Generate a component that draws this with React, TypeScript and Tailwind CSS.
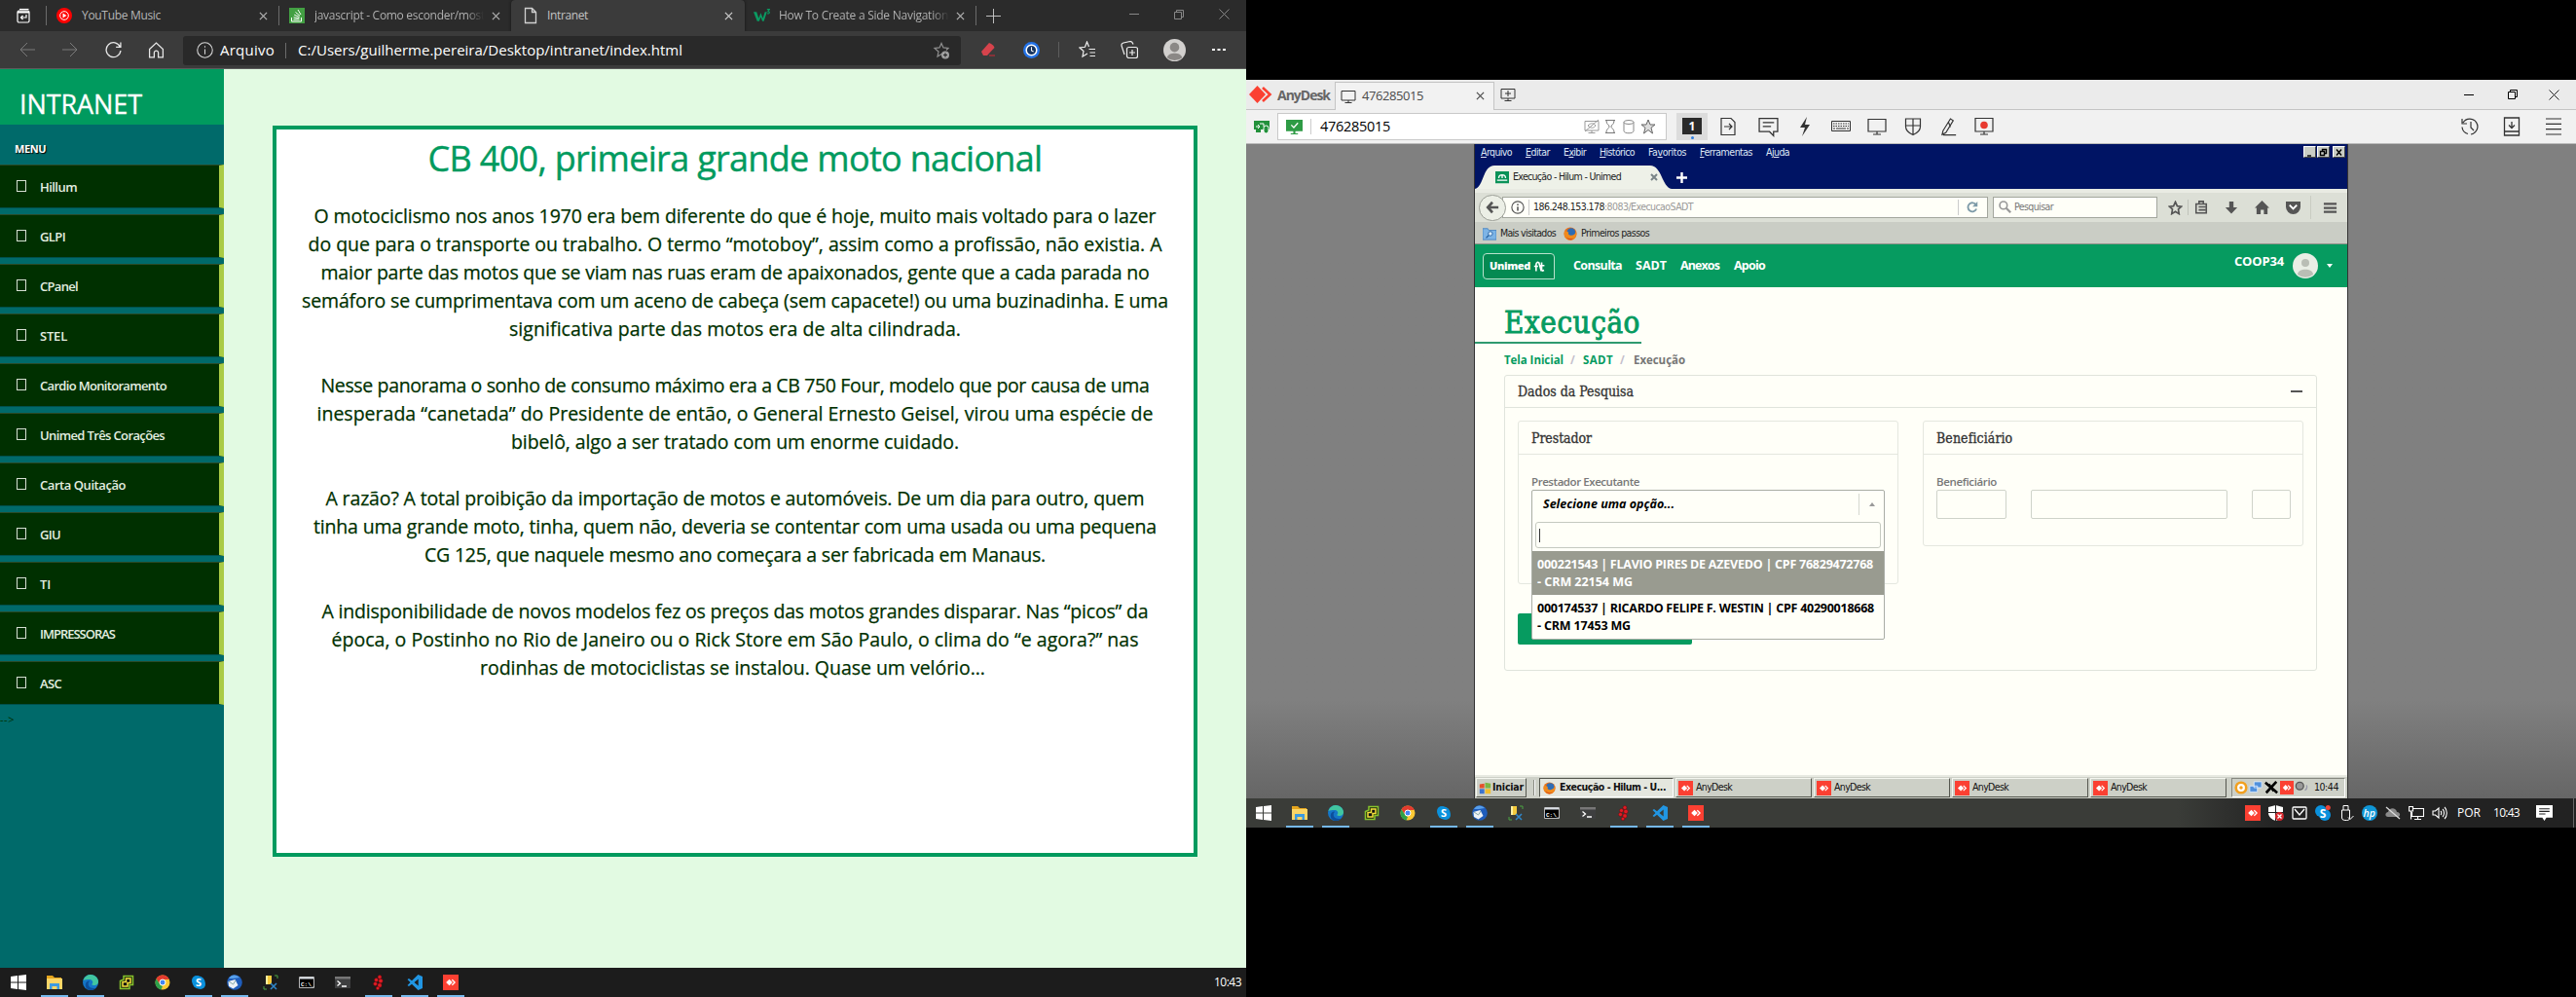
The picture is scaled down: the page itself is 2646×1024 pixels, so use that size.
import React, { useLayoutEffect, useRef, useState } from "react";

/** Text run tracked so that it occupies a given width. */
function T({ w, c = "", children }: { w: number; c?: string; children: React.ReactNode }) {
  const ref = useRef<HTMLSpanElement>(null);
  const [ls, setLs] = useState<number | null>(null);
  useLayoutEffect(() => {
    const el = ref.current;
    if (!el || ls !== null) return;
    const n = (el.textContent || "").length;
    setLs((w - el.getBoundingClientRect().width) / n);
  }, [ls, w]);
  return (
    <span ref={ref} className={"inline-block shrink-0 whitespace-pre " + c} style={{ letterSpacing: ls === null ? undefined : ls + "px" }}>
      {children}
    </span>
  );
}

function I({ c = "", s = 16, v = 16, sw = 1, children }: { c?: string; s?: number; v?: number; sw?: number; children: React.ReactNode }) {
  return (
    <svg width={s} height={s} viewBox={`0 0 ${v} ${v}`} fill="none" stroke="currentColor" strokeWidth={sw} className={"block shrink-0 " + c}>
      {children}
    </svg>
  );
}

const Close = ({ c = "", s = 9 }: { c?: string; s?: number }) => (
  <I c={c} s={s} v={10} sw={1.3}><path d="M1 1l8 8M9 1l-8 8" /></I>
);

const AnyIcon = ({ c = "", s = 16 }: { c?: string; s?: number }) => (
  <I c={c} s={s}>
    <path d="M0 0h16v16H0z" fill="#fb4032" stroke="none" />
    <path d="M6.500 4.700l3.300 3.300-3.300 3.300L3.200 8z" fill="#fff" stroke="none" />
    <path d="M9.300 5.200L12.100 8l-2.800 2.800" stroke="#fff" strokeWidth="1.300" />
  </I>
);

const Firefox = ({ c = "", s = 14 }: { c?: string; s?: number }) => (
  <I c={c} s={s}>
    <circle cx="8" cy="8" r="7.500" fill="#e8701a" stroke="none" />
    <circle cx="9" cy="6.500" r="5" fill="#2d6cb5" stroke="none" />
    <path d="M1 5c2-1 3 1 5 1-1 2 0 4 3 4s5-2 6-5c1 6-2 10.500-7 10.500S0 11 1 5z" fill="#f08a1d" stroke="none" />
    <path d="M3 11c2 3 6 4 9 2-2 3-7 3-9-2z" fill="#d23c17" stroke="none" />
  </I>
);

const taskIcons: { on: boolean; el: React.ReactNode }[] = [
  { on: false, el: <I c="text-white"><path fill="#fff" stroke="none" d="M0 2l7-1v6.500H0zM8 .9L16 0v7.500H8zM0 8.500h7V15l-7-1zM8 8.500h8V16l-8-1z" /></I> },
  { on: true, el: <I><path fill="#e5a51d" stroke="none" d="M0 1h6l2 2h7v3H0z" /><path fill="#fbd667" stroke="none" d="M0 4h16v11H0z" /><path fill="#3d9be0" stroke="none" d="M3 9h10v6h-2.500v-3h-5v3H3z" /></I> },
  { on: true, el: <I><circle cx="8" cy="8" r="8" fill="#1476c8" stroke="none" /><path d="M.5 6C2 1 6 0 8 0c5 0 8 4 8 7 0 3-2 4-4.500 4S9 10 10 9c1-2-1-4-3-4-3 0-5 0-6.500 1z" fill="#41c6a0" stroke="none" /><path d="M6 8c-1 3 1 6 5 6 1 0 2 0 3-1-2 3-5 3-6 3-4 0-6-4-5-7 1-2 3-3 4-2z" fill="#0c4f9c" stroke="none" /></I> },
  { on: false, el: <I sw={1.5}><path d="M5 1.500h9.500v9H11v4H1.500v-8L5 5z" fill="#1a220c" stroke="#86c32c" /><path d="M7.500 4h4.500v4.500H9V12H4V7.500h3.500z" fill="#111" stroke="#f4de3b" /></I> },
  { on: false, el: <I><circle cx="8" cy="8" r="7.500" fill="#fcc934" stroke="none" /><path d="M1.500 4.300A7.500 7.500 0 0114.800 5H8L5 9.500z" fill="#e33b2e" stroke="none" /><path d="M1.500 4.300L6 11l2 1-1.500 3.500A7.500 7.500 0 011.500 4.300z" fill="#2da14c" stroke="none" /><circle cx="8" cy="8" r="3" fill="#4286f4" stroke="#fff" /></I> },
  { on: true, el: <I><circle cx="6" cy="6" r="5" fill="#0b91dc" stroke="none" /><circle cx="10" cy="10" r="5" fill="#0b91dc" stroke="none" /><circle cx="8" cy="8" r="6.500" fill="#0b91dc" stroke="none" /><text x="8" y="11.800" textAnchor="middle" fontSize="11" fontWeight="700" fill="#fff" stroke="none" fontFamily="Open Sans, sans-serif">S</text></I> },
  { on: true, el: <I><circle cx="8" cy="8" r="7.800" fill="#1f5dbb" stroke="none" /><path d="M2 4c3-5 8-4 11-1l-6 1z" fill="#58a0ea" stroke="none" /><path d="M1.500 7l7-2 3 6-5 3.500L2 12z" fill="#eef2f6" stroke="none" /><path d="M2 7l4.500 3L9 6" stroke="#8aa" /></I> },
  { on: false, el: <I><path d="M3 1h6v9H3z" fill="#f3c93c" stroke="none" /><path d="M3 1h2v9H3z" fill="#fff0a0" stroke="none" /><path d="M12 1h3v3M1 12v3h3" stroke="#4aa543" /><path d="M8 9l6 6M14 9l-6 6" stroke="#2f86c9" strokeWidth="1.600" /></I> },
  { on: false, el: <I><path d="M.5 2.500h15v11H.5z" fill="#000" stroke="#b8b8b8" /><path d="M1 3.500h14" stroke="#d8dee4" strokeWidth="2" /><text x="2" y="11.500" fontSize="6" fontWeight="700" fill="#fff" stroke="none" fontFamily="Liberation Mono, monospace">C:\_</text></I> },
  { on: false, el: <I><path d="M0 2h16v12H0z" fill="#3e3f40" stroke="none" /><path d="M0 2h16v2.500H0z" fill="#777" stroke="none" /><path d="M2.500 6.500L5.500 9l-3 2.500M7 12h5" stroke="#fff" strokeWidth="1.300" /></I> },
  { on: true, el: <I><g fill="#df1b24" stroke="#5a0608" strokeWidth=".4"><circle cx="9" cy="2.500" r="2" /><circle cx="5.500" cy="5.500" r="2" /><circle cx="10" cy="6.500" r="2.200" /><circle cx="4.500" cy="9.500" r="2" /><circle cx="9" cy="11" r="2.200" /><circle cx="7" cy="14" r="1.800" /></g></I> },
  { on: true, el: <I><path d="M11.500 0L16 2v12l-4.500 2L5 9.700 2 12 .5 11 3.500 8 .5 5 2 4l3 2.300zM11.700 4.500L7.500 8l4.200 3.500z" fill="#2196e3" stroke="none" fillRule="evenodd" /></I> },
  { on: true, el: <AnyIcon /> },
];

function TaskIcons() {
  return (
    <div className="flex h-full">
      {taskIcons.map((t, i) => (
        <div key={i} className="flex h-full w-[37px] flex-col items-center">
          <div className="flex h-[28px] items-center pt-[2px]">{t.el}</div>
          <div className={"h-[2px] w-7 " + (t.on ? "bg-[#76b9ed]" : "")} />
        </div>
      ))}
    </div>
  );
}

/* ---------- left monitor ---------- */

function EdgeTabs() {
  return (
    <div className="flex h-8 shrink-0 items-center bg-[#2b2b2b] text-[12px] text-[#b5b5b5]">
      <I c="ml-[16px] text-white" s={16} sw={1.2}><rect x="2" y="3" width="12" height="12" rx="1.500" /><path d="M2 4.500h12" strokeWidth="2" /><path d="M4 1.500h9.500" /><path d="M11 7v3H5.500m2-2l-2 2 2 2" /></I>
      <div className="ml-[15px] h-5 w-px bg-[#6b6b6b]" />
      <I c="ml-[10px]"><circle cx="8" cy="8" r="8" fill="#f00" stroke="none" /><circle cx="8" cy="8" r="4.300" stroke="#fff" /><path d="M6.500 5.500v5l4-2.500z" fill="#fff" stroke="none" /></I>
      <T c="ml-[10px]" w={81}>YouTube Music</T>
      <Close c="ml-[101px]" />
      <div className="ml-[11px] h-5 w-px bg-[#6b6b6b]" />
      <I c="ml-[10px]"><path d="M0 0h16v16H0z" fill="#43a043" stroke="none" /><path d="M2.500 10v4h10v-4M4.500 12h6M4.600 9.800l5.800.9M5.200 7.200l5.400 2.200M6.500 4.500l4.500 3.700M9 2l3 5" stroke="#fff" /></I>
      <div className="ml-[10px] w-[174px] overflow-hidden bg-gradient-to-r from-[#b5b5b5] from-90% to-[#2b2b2b] bg-clip-text text-transparent">
        <T w={175}>javascript - Como esconder/most</T>
      </div>
      <Close c="ml-[8px]" />
      <div className="ml-[11px] flex h-8 w-[240px] items-center rounded-t-[4px] bg-[#3b3b3b] shadow-[0_0_3px_#111]">
        <I c="ml-[11px] text-[#d0d0d0]" s={18} v={18} sw={1.3}><path d="M3.500 1.500h7l4 4v11h-11zM10.500 1.500v4h4" /></I>
        <T c="ml-[8px] text-[#c4c4c4]" w={42}>Intranet</T>
        <Close c="ml-[140px] text-[#d0d0d0]" />
      </div>
      <I c="ml-[9px]" s={17}><path d="M0 4h3l2 6 2-5 2 5 2-6h2l-3 9H8.500L7 9l-1.500 4H3.500z" fill="#0a9a62" stroke="none" /><path d="M13 1.500h2.500L14 3.500c2 0 2 2.500-.8 2" stroke="#0a9a62" /></I>
      <div className="ml-[9px] w-[175px] overflow-hidden bg-gradient-to-r from-[#b5b5b5] from-90% to-[#2b2b2b] bg-clip-text text-transparent">
        <T w={174}>How To Create a Side Navigation</T>
      </div>
      <Close c="ml-[7px]" />
      <div className="ml-[11px] h-5 w-px bg-[#6b6b6b]" />
      <I c="ml-[10px] text-[#c8c8c8]" s={15}><path d="M8 0v16M0 8h16" /></I>
      <div className="ml-[132px] mb-[3px] h-px w-[10px] bg-[#888]" />
      <I c="ml-[36px] mb-[3px] text-[#888]" s={10} v={10}><path d="M.5 2.500h7v7h-7zM2.500 2.500v-2h7v7h-2" /></I>
      <I c="ml-[36px] mb-[3px] text-[#888]" s={11} v={11}><path d="M.5.5l10 10M10.500.5l-10 10" /></I>
    </div>
  );
}

function EdgeToolbar() {
  return (
    <div className="flex h-[39px] shrink-0 items-center border-b border-[#5c5c5c] bg-[#3b3b3b] text-white">
      <I c="ml-[20px] text-[#7b7b7b]"><path d="M16 8H1M8 1L1 8l7 7" /></I>
      <I c="ml-[28px] text-[#7b7b7b]"><path d="M0 8h15M8 1l7 7-7 7" /></I>
      <I c="ml-[28px] text-[#e8e8e8]" s={17} sw={1.2}><path d="M14.500 5A7 7 0 1015 8.500M15 .5V5h-4.500" /></I>
      <I c="ml-[27px] text-[#e8e8e8]" s={17} sw={1.2}><path d="M1.500 7L8 1l6.500 6v8H10v-4.500a2 2 0 00-4 0V15H1.500z" /></I>
      <div className="ml-[19px] mt-px flex h-[30px] w-[799px] items-center rounded-[3px] bg-[#292929] text-[15px]">
        <I c="ml-[14px] text-[#d8d8d8]" s={17}><circle cx="8" cy="8" r="7.300" /><path d="M8 7v5M8 4v1.500" /></I>
        <T c="ml-[7px]" w={56}>Arquivo</T>
        <div className="ml-[11px] h-4 w-px bg-[#6b6b6b]" />
        <T c="ml-[12px]" w={395}>C:/Users/guilherme.pereira/Desktop/intranet/index.html</T>
        <I c="ml-[257px] text-[#909090]" s={18} v={18} sw={1.2}><path d="M10 12l-5 3 1-5L2 6.500l5-.6L9 1.500l2 4.400 5 .6-2 2" /><circle cx="13" cy="13.500" r="4" fill="#a0a0a0" stroke="none" /><path d="M13 11.500v4M11 13.500h4" stroke="#292929" /></I>
      </div>
      <I c="ml-[20px]" s={16}><path d="M1 10L9 1c3 1 5 3 5.500 5L7 14H3z" fill="#d6434c" stroke="none" /><path d="M9 14h6" stroke="#a03038" strokeWidth="1.500" /></I>
      <I c="ml-[28px]" s={17}><circle cx="8" cy="8" r="8" fill="#2473e8" stroke="none" /><circle cx="8" cy="8" r="5" fill="#17345f" stroke="#fff" strokeWidth="1.400" /><path d="M8 5v3.500l2 1" stroke="#fff" /></I>
      <div className="ml-[19px] h-4 w-px bg-[#5d5d5d]" />
      <I c="ml-[20px] text-[#eee]" s={18} v={18} sw={1.2}><path d="M9 13l-5 3 1-5.500L1 7l5.500-.7L8.500 1l2 5M10.500 8.500H17M11.500 12H17M11.500 15.500H17" /></I>
      <I c="ml-[25px] text-[#eee]" s={18} v={18} sw={1.2}><rect x="6.500" y="6.500" width="11" height="11" rx="2" /><path d="M12 9v6M9 12h6M4 14L1 5c0-2 0-2 2-3l7-1.500c2 0 2 1 3 3" /></I>
      <I c="ml-[26px]" s={23} v={24}><circle cx="12" cy="12" r="12" fill="#d2d0ce" stroke="none" /><circle cx="12" cy="9" r="5" fill="#8b8886" stroke="none" /><path d="M4 20c1-6 15-6 16 0a12 12 0 01-16 0z" fill="#8b8886" stroke="none" /></I>
      <I c="ml-[26px]" s={16}><path d="M1 7h3v2H1zM6.500 7h3v2h-3zM12 7h3v2h-3z" fill="#fff" stroke="none" /></I>
    </div>
  );
}

const menu: [string, number][] = [
  ["Hillum", 38], ["GLPI", 26], ["CPanel", 39], ["STEL", 28], ["Cardio Monitoramento", 130], ["Unimed Três Corações", 128],
  ["Carta Quitação", 88], ["GIU", 21], ["TI", 11], ["IMPRESSORAS", 77], ["ASC", 22],
];

function Sidebar() {
  return (
    <aside className="w-[230px] shrink-0 bg-[#006a6a] font-['Open_Sans',sans-serif]">
      <div className="flex h-[57px] items-end bg-[#009a5e] pl-[20px] text-[27px] font-medium leading-[43px] text-white [-webkit-text-stroke:0.3px_#fff]">
        <T w={126}>INTRANET</T>
      </div>
      <div className="flex h-[41px] items-center pl-[15px] pt-[9px] text-[11px] font-bold text-white [text-shadow:1px_1px_1px_#000]">
        <T w={32}>MENU</T>
      </div>
      <div className="flex flex-col gap-[6px]">
        {menu.map(([m, w]) => (
          <div key={m} className="flex h-[45px] items-center border-b border-r-[5px] border-t border-b-[#00504c] border-r-[#aacb45] border-t-[#2a4a26] bg-[#003000] pl-[17px] pt-[2px] text-[13px] font-semibold text-[#e4eee0]">
            <div className="mb-[4px] h-[12px] w-[10px] border border-[#d5dfd2]" />
            <T c="ml-[14px]" w={w}>{m}</T>
          </div>
        ))}
      </div>
      <div className="mt-[7px] text-[11px] leading-4 text-[#003000]"><T w={15}>{"-->"}</T></div>
    </aside>
  );
}

const paragraphs: [string, number][][] = [
  [
    ["O motociclismo nos anos 1970 era bem diferente do que é hoje, muito mais voltado para o lazer", 865],
    ["do que para o transporte ou trabalho. O termo “motoboy”, assim como a profissão, não existia. A", 877],
    ["maior parte das motos que se viam nas ruas eram de apaixonados, gente que a cada parada no", 851],
    ["semáforo se cumprimentava com um aceno de cabeça (sem capacete!) ou uma buzinadinha. E uma", 890],
    ["significativa parte das motos era de alta cilindrada.", 464],
  ],
  [
    ["Nesse panorama o sonho de consumo máximo era a CB 750 Four, modelo que por causa de uma", 851],
    ["inesperada “canetada” do Presidente de então, o General Ernesto Geisel, virou uma espécie de", 859],
    ["bibelô, algo a ser tratado com um enorme cuidado.", 460],
  ],
  [
    ["A razão? A total proibição da importação de motos e automóveis. De um dia para outro, quem", 841],
    ["tinha uma grande moto, tinha, quem não, deveria se contentar com uma usada ou uma pequena", 866],
    ["CG 125, que naquele mesmo ano começara a ser fabricada em Manaus.", 638],
  ],
  [
    ["A indisponibilidade de novos modelos fez os preços das motos grandes disparar. Nas “picos” da", 849],
    ["época, o Postinho no Rio de Janeiro ou o Rick Store em São Paulo, o clima do “e agora?” nas", 829],
    ["rodinhas de motociclistas se instalou. Quase um velório... ", 524],
  ],
];

function LeftMonitor() {
  return (
    <div className="flex h-[1024px] w-[1280px] shrink-0 flex-col">
      <EdgeTabs />
      <EdgeToolbar />
      <div className="flex h-[923px] bg-[#e2fae2]">
        <Sidebar />
        <main className="ml-[50px] mt-[58px] flex h-[751px] w-[950px] flex-col items-center border-4 border-[#009a5e] bg-white font-['Open_Sans',sans-serif] text-[#003000]">
          <h1 className="mt-[4px] text-[36px] leading-[52px] text-[#009a5e] [-webkit-text-stroke:0.4px_#009a5e]"><T w={631}>CB 400, primeira grande moto nacional</T></h1>
          <div className="mt-[18px] flex flex-col gap-[29px] text-[19.5px] leading-[29px] [-webkit-text-stroke:0.25px_#003000]">
            {paragraphs.map((p, i) => (
              <div key={i} className="flex flex-col items-center">
                {p.map(([t, w]) => <div key={t} className="h-[29px]"><T w={w}>{t}</T></div>)}
              </div>
            ))}
          </div>
        </main>
      </div>
      <div className="flex h-[30px] items-center bg-[#1c1c1c] text-white">
        <TaskIcons />
        <T c="ml-[766px] text-[12px]" w={28}>10:43</T>
      </div>
    </div>
  );
}

/* ---------- right monitor ---------- */

function AnyDeskChrome() {
  return (
    <>
      <div className="flex h-[31px] shrink-0 items-center border-b border-[#c4c4c4] bg-[#ebebeb] text-[#4a4a4a]">
        <svg width="24" height="18" viewBox="0 0 24 18" className="ml-[3px] shrink-0"><path d="M8.500 0L17 9l-8.500 9L0 9z" fill="#fb4032" /><path d="M14 2l7.500 7-7.500 7" fill="none" stroke="#fb4032" strokeWidth="2.600" /></svg>
        <T c="ml-[5px] text-[14px] font-bold text-[#666]" w={54}>AnyDesk</T>
        <div className="ml-[5px] mt-[2px] flex h-[29px] w-[164px] items-center border border-b-0 border-[#c4c4c4] bg-[#f2f2f2] text-[13px]">
          <I c="ml-[5px] text-[#333]" s={16}><path d="M1 2.500h14v9.500H1zM8 12v2.500M4.500 14.500h7" /></I>
          <T c="ml-[6px]" w={63}>476285015</T>
          <Close c="ml-[54px]" s={9} />
        </div>
        <I c="ml-[6px] text-[#333]" s={16}><path d="M1 2.500h14v9.500H1zM8 12v2.500M4.500 14.500h7M8 4v6M5 7h6" /></I>
        <div className="ml-[974px] h-px w-[10px] bg-black" />
        <I c="ml-[35px] text-black" s={10} v={10}><path d="M.5 2.500h7v7h-7zM2.500 2.500v-2h7v7h-2" /></I>
        <I c="ml-[32px] text-[#222]" s={11} v={11}><path d="M.5.5l10 10M10.500.5l-10 10" /></I>
      </div>
      <div className="flex h-[35px] shrink-0 items-center border-b border-[#b9b9b9] bg-[#f1f1f1] text-[#333]">
        <I c="ml-[8px]"><path d="M0 2h16v9H0z" fill="#23913b" stroke="none" /><path d="M2 11h5v3H2z" fill="#23913b" stroke="none" /><path d="M2 8h4m-2-2l2 2-2 2M6 5h4v3" stroke="#fff" /><rect x="10" y="7" width="5" height="8" rx="2.500" fill="#23913b" stroke="#fff" /></I>
        <div className="ml-[8px] flex h-[28px] w-[400px] items-center border border-[#c9c9c9] bg-white">
          <I c="ml-[8px]" s={17}><path d="M0 1h16v11H0zM7 12h2v2h2.500v1h-7v-1H7z" fill="#2e9b45" stroke="none" /><path d="M5 6l2.500 2.500L11.500 4" stroke="#fff" strokeWidth="1.200" /></I>
          <div className="ml-[8px] h-4 w-px bg-[#ccc]" />
          <T c="ml-[9px] text-[14.5px] text-black" w={72}>476285015</T>
          <I c="ml-[199px] text-[#999]" s={16}><path d="M1 2.500h14v9.500H1zM8 12v2.500M4.500 14.500h7M1 13L15 1M4 7c3-3 6-3 8 0-2 3-5 3-8 0z" /></I>
          <I c="ml-[3px] text-[#777]" s={16}><path d="M3 1.500h10M3 14.500h10M4 2c0 4 3 4 3 6s-3 2-3 6M12 2c0 4-3 4-3 6s3 2 3 6" /></I>
          <I c="ml-[3px] text-[#888]" s={16}><ellipse cx="8" cy="3.500" rx="5" ry="2" /><path d="M3 3.500v9c0 3 10 3 10 0v-9" /></I>
          <I c="ml-[4px] text-[#666]" s={16}><path d="M8 1l2 5h5l-4 3.200L12.500 15 8 11.500 3.500 15 5 9.200 1 6h5z" fill="#ddd" /></I>
        </div>
        <div className="ml-[10px] flex h-[28px] w-[32px] flex-col items-center bg-[#dcdcdc] pt-[5px]">
          <div className="flex h-[17px] w-5 items-center justify-center bg-[#2a2a2a] text-[12px] font-bold text-white">1</div>
          <div className="mt-[2px] h-[3px] w-[3px] rounded-full bg-[#2f7fe0]" />
        </div>
        <I c="ml-[11px]" s={20} v={20} sw={1.2}><path d="M3 1.500h10l4 4v13H3zM6 10h8M11 7l3 3-3 3" /></I>
        <I c="ml-[21px]" s={21} v={20} sw={1.2}><path d="M1 1.500h18v13h-4v4l-4-4H1zM4.500 5.500h11M4.500 9.500h8" /></I>
        <I c="ml-[17px]" s={20} v={20}><path d="M12 0L5 11h5l-3 9 8-12H10z" fill="#333" stroke="none" /></I>
        <I c="ml-[17px]" s={20} v={20}><path d="M.5 4.500h19v10H.5z" /><path d="M2 7h16M2 9.500h16" strokeDasharray="1.500 1" /><path d="M2 12h2M5 12h10M16 12h2" /></I>
        <I c="ml-[17px]" s={20} v={20} sw={1.2}><path d="M1 2.500h18V15H1zM10 15v3M6 18h8" /></I>
        <I c="ml-[17px]" s={20} v={20} sw={1.2}><path d="M2.500 2h15v8c0 4-4 7-7.500 8.500C6.500 17 2.500 14 2.500 10zM10 2v16M2.500 9h15" /></I>
        <I c="ml-[18px]" s={19} v={20} sw={1.2}><path d="M3 14L11 1l3 2-8 13-4 2zM9 5l2 5M3 18.500h14" /></I>
        <I c="ml-[16px]" s={20} v={20} sw={1.2}><path d="M1 1.500h18V15H1zM10 15v3M6 18h8" /><circle cx="10" cy="8.500" r="3.800" fill="#e8392f" stroke="none" /></I>
        <I c="ml-[479px]" s={20} v={20} sw={1.2}><path d="M3 6a8 8 0 118 12M8 17.500a8 8 0 01-6-7M2 2v5h5M11 5v6l3 3" /></I>
        <I c="ml-[23px]" s={20} v={20} sw={1.3}><path d="M2.500 1h15v18h-15zM2.500 15h15M10 5v6M7 8.500l3 3 3-3" /></I>
        <I c="ml-[23px]" s={20} v={20} sw={1.2}><path d="M2 2h16M2 7.300h16M2 12.600h16M2 18h16" /></I>
      </div>
    </>
  );
}

const Mn = ({ a, u, b, w, c }: { a: string; u: string; b: string; w: number; c: string }) => (
  <T w={w} c={c}>{a}<span className="underline">{u}</span>{b}</T>
);

function FirefoxChrome() {
  return (
    <div className="font-['DejaVu_Sans_Condensed','DejaVu_Sans',sans-serif] text-[10.5px]">
      <div className="h-[46px] bg-[#001464] text-[#dfe6f5]">
        <div className="flex h-[22px] items-start">
          <Mn c="ml-[6px] mt-[1px]" a="" u="A" b="rquivo" w={32} />
          <Mn c="ml-[14px] mt-[1px]" a="" u="E" b="ditar" w={25} />
          <Mn c="ml-[14px] mt-[1px]" a="E" u="x" b="ibir" w={23} />
          <Mn c="ml-[14px] mt-[1px]" a="" u="H" b="istórico" w={36} />
          <Mn c="ml-[14px] mt-[1px]" a="Fa" u="v" b="oritos" w={39} />
          <Mn c="ml-[14px] mt-[1px]" a="" u="F" b="erramentas" w={54} />
          <Mn c="ml-[14px] mt-[1px]" a="Aj" u="u" b="da" w={24} />
          <div className="ml-[528px] mt-[2px] flex gap-px">
            {["M2 8h4", "M3.500 3.500v-2h4v4h-2M1.500 3.500h4v4h-4z", "M2 1.500l5 6M7 1.500l-5 6"].map((d, i) => (
              <div key={i} className={"flex h-[12px] w-[13px] items-center justify-center border border-b-[#444] border-l-white border-r-[#444] border-t-white bg-[#cacdc5] text-black " + (i === 2 ? "ml-[2px]" : "")}>
                <I s={9} v={9} sw={1.4}><path d={d} /></I>
              </div>
            ))}
          </div>
        </div>
        <div className="flex h-[24px] items-center">
          <div className="h-[24px] w-[202px] bg-[#eef1e8] [clip-path:path('M0_24C9_22_8_0_20_0H180C192_0_192_22_202_24Z')]">
            <div className="ml-[21px] flex h-[24px] items-center text-[#222]">
              <I s={14}><path d="M0 1h16v14H0z" fill="#0a9258" stroke="none" /><path d="M2 11.500h12" stroke="#fff" strokeWidth="1.500" /><path d="M4 9c0-5 8-5 8 0M8 5v4" stroke="#fff" strokeWidth="1.500" /></I>
              <T c="ml-[4px]" w={111}>Execução - Hilum - Unimed</T>
              <I c="ml-[30px] text-[#7a8588]" s={8} v={8} sw={2}><path d="M1 1l6 6M7 1l-6 6" /></I>
            </div>
          </div>
          <I c="ml-[5px] text-white" s={11} v={11} sw={2.4}><path d="M5.500 0v11M0 5.500h11" /></I>
        </div>
      </div>
      <div className="flex h-[34px] items-center border-t-4 border-[#e9ebe3] bg-[#dcdfd6] text-[#555]">
        <div className="z-10 ml-[4px] flex h-[27px] w-[28px] shrink-0 items-center justify-center rounded-full border border-[#9b9e96] bg-[#ecefe6]">
          <I s={14} sw={3}><path d="M15 8H3M8 2L2.500 8 8 14" /></I>
        </div>
        <div className="-ml-[4px] mb-[1px] flex h-[22px] w-[499px] items-center border border-[#a3a69d] bg-[#fffff8]">
          <I c="ml-[8px]" s={14} sw={1.3}><circle cx="8" cy="8" r="7" /><path d="M8 7v5M8 4v1.700" strokeWidth="1.800" /></I>
          <div className="ml-[4px] h-4 w-px bg-[#ccc]" />
          <T c="ml-[4px] text-[#222]" w={73}>186.248.153.178</T>
          <T c="text-[#999]" w={91}>:8083/ExecucaoSADT</T>
          <div className="ml-[272px] h-4 w-px bg-[#ccc]" />
          <I c="ml-[8px] text-[#7d9aa8]" s={12} sw={2.5}><path d="M13 4.500A6 6 0 1013.500 10" /><path d="M15 0v7H8z" fill="currentColor" stroke="none" /></I>
        </div>
        <div className="ml-[5px] mb-[1px] flex h-[22px] w-[169px] items-center border border-[#a3a69d] bg-[#fffff8] text-[#777]">
          <I c="ml-[5px] text-[#999]" s={13} sw={2}><circle cx="6" cy="6" r="4.700" /><path d="M9.500 9.500L15 15" strokeWidth="2.800" /></I>
          <T c="ml-[3px]" w={40}>Pesquisar</T>
        </div>
        <I c="ml-[11px]" s={15} sw={1.8}><path d="M8 1.500l2 4.500 4.500.5-3.300 3L12 14.500 8 12l-4 2.500.8-5-3.300-3L6 6z" /></I>
        <div className="ml-[5px] h-4 w-px bg-[#c0c3ba]" />
        <I c="ml-[6px]" s={14} sw={1.8}><path d="M2 4h12v10.500H2zM5.500 3.500V1h5v2.500M5 7.500h8M5 11h8" /></I>
        <I c="ml-[17px]" s={14}><path d="M5.500 1h5v7H15l-7 7.500L1 8h4.500z" fill="#555" stroke="none" /></I>
        <I c="ml-[17px]" s={15}><path d="M8 0l8 8h-2v7h-4v-5H6.500v5H2V8H0z" fill="#555" stroke="none" /></I>
        <I c="ml-[17px]" s={15}><path d="M0 1h16v6a8 8 0 01-16 0z" fill="#555" stroke="none" /><path d="M4 5l4 4 4-4" stroke="#fff" strokeWidth="2" /></I>
        <div className="ml-[10px] h-6 w-px bg-[#c9ccc2]" />
        <I c="ml-[12px]" s={15} sw={2.4}><path d="M1 3.500h14M1 8h14M1 12.500h14" /></I>
      </div>
      <div className="flex h-[23px] items-center border-b border-[#8e9088] bg-[#cacdc5] pt-[2px] text-[#222]">
        <I c="ml-[8px]" s={14}><path d="M0 2h6l1 2h9v11H0z" fill="#7db4e6" stroke="#4a86c0" /><circle cx="9" cy="8" r="2.500" stroke="#235f9e" fill="#d8ecff" /><path d="M7 10l-3 3" stroke="#235f9e" strokeWidth="1.500" /></I>
        <T c="ml-[4px]" w={57}>Mais visitados</T>
        <Firefox c="ml-[8px]" />
        <T c="ml-[4px]" w={70}>Primeiros passos</T>
      </div>
    </div>
  );
}

const slab = "font-['DejaVu_Serif_Condensed','DejaVu_Serif',serif]";

function RemotePage() {
  return (
    <div className="flex h-[545px] flex-col bg-[#fffff8] font-['Open_Sans',sans-serif]">
      <div className="flex h-[44px] shrink-0 items-center bg-[#069b60] text-[12.5px] font-bold text-white">
        <div className="ml-[8px] flex h-[27px] w-[74px] items-center rounded-[4px] rounded-br-none border border-[#b8e2cd] bg-[#048a52] pl-[6px] text-[11px] font-extrabold">
          <T w={42}>Unimed</T>
          <I c="ml-[3px]" s={13} sw={2}><path d="M3.500 14V6c0-3 3-4 3.500-2M1 8h5M7 3l3 11M10.500 3v9c0 2 1 2 3 1M8 7h6" /></I>
        </div>
        <T c="ml-[19px]" w={50}>Consulta</T>
        <T c="ml-[14px]" w={32}>SADT</T>
        <T c="ml-[14px]" w={40}>Anexos</T>
        <T c="ml-[15px]" w={32}>Apoio</T>
        <T c="ml-[482px] mb-[8px] text-[13px]" w={51}>COOP34</T>
        <I c="ml-[9px]" s={26} v={26}><circle cx="13" cy="13" r="13" fill="#e9eee5" stroke="none" /><circle cx="13" cy="10" r="4" fill="#b9beb5" stroke="none" /><path d="M5 22c0-7 16-7 16 0a13 13 0 01-16 0z" fill="#b9beb5" stroke="none" /></I>
        <I c="ml-[9px]" s={6} v={6}><path d="M0 1h6L3 5z" fill="#fff" stroke="none" /></I>
      </div>
      <div className={"mt-[15px] h-[43px] w-[171px] border-b-2 border-[#2f9a70] pl-[30px] text-[31px] leading-[42px] text-[#069b60] [-webkit-text-stroke:0.9px_#069b60] " + slab}>
        <T w={140}>Execução</T>
      </div>
      <div className="mt-[7px] flex h-[20px] items-center pl-[30px] text-[11.5px] font-bold text-[#069b60]">
        <T w={61}>Tela Inicial</T>
        <span className="ml-[7px] w-[6px] text-[#c5bfcc]">/</span>
        <T c="ml-[7px]" w={31}>SADT</T>
        <span className="ml-[7px] w-[6px] text-[#c5bfcc]">/</span>
        <T c="ml-[8px] text-[#777]" w={53}>Execução</T>
      </div>
      <div className="ml-[30px] mt-[5px] h-[304px] w-[835px] rounded-[3px] border border-[#e0e4dc]">
        <div className={"flex h-[33px] items-center justify-between border-b border-[#e0e4dc] pl-[13px] pr-[14px] text-[14px] text-[#333] [-webkit-text-stroke:0.3px_#333] " + slab}>
          <T w={119}>Dados da Pesquisa</T>
          <div className="h-[2px] w-[12px] bg-[#555]" />
        </div>
        <div className="flex items-start gap-[25px] pl-[13px] pt-[13px]">
          <div className="relative h-[168px] w-[391px] rounded-[3px] border border-[#e4e7df]">
            <div className={"flex h-[34px] items-center border-b border-[#e4e7df] pl-[13px] pt-[2px] text-[14px] text-[#333] [-webkit-text-stroke:0.3px_#333] " + slab}><T w={62}>Prestador</T></div>
            <div className="mt-[20px] pl-[13px] text-[11.5px] font-semibold leading-[16px] text-[#777]"><T w={111}>Prestador Executante</T></div>
            <div className="absolute left-[13px] top-[70px] z-10 w-[363px] rounded-[2px] border border-[#a9ada5] bg-[#fffff8] text-black">
              <div className="flex h-[28px] items-center pl-[11px] text-[12.5px] font-bold italic">
                <T w={135}>Selecione uma opção...</T>
                <div className="ml-[189px] h-[22px] w-px bg-[#d5d8d0]" />
                <I c="ml-[10px]" s={6} v={6}><path d="M0 5h6L3 1z" fill="#999" stroke="none" /></I>
              </div>
              <div className="ml-[3px] mt-[4px] flex h-[27px] w-[355px] items-center rounded-[3px] border border-[#c5c9c0] pl-[3px]">
                <div className="h-[14px] w-px bg-[#333]" />
              </div>
              <div className="mt-[3px] h-[45px] bg-[#999b90] pl-[5px] pt-[5px] text-[12.5px] font-bold leading-[18px] text-white">
                <div className="flex"><T w={345}>000221543 | FLAVIO PIRES DE AZEVEDO | CPF 76829472768</T></div>
                <div className="flex"><T w={98}>- CRM 22154 MG</T></div>
              </div>
              <div className="h-[45px] pl-[5px] pt-[5px] text-[12.5px] font-bold leading-[18px]">
                <div className="flex"><T w={346}>000174537 | RICARDO FELIPE F. WESTIN | CPF 40290018668</T></div>
                <div className="flex"><T w={96}>- CRM 17453 MG</T></div>
              </div>
            </div>
          </div>
          <div className="h-[129px] w-[391px] rounded-[3px] border border-[#e4e7df]">
            <div className={"flex h-[34px] items-center border-b border-[#e4e7df] pl-[13px] pt-[2px] text-[14px] text-[#333] [-webkit-text-stroke:0.3px_#333] " + slab}><T w={78}>Beneficiário</T></div>
            <div className="mt-[20px] pl-[13px] text-[11.5px] font-semibold leading-[16px] text-[#777]"><T w={62}>Beneficiário</T></div>
            <div className="flex pl-[13px]">
              <div className="h-[30px] w-[72px] rounded-[2px] border border-[#cfd3ca]" />
              <div className="ml-[25px] h-[30px] w-[202px] rounded-[2px] border border-[#cfd3ca]" />
              <div className="ml-[25px] h-[30px] w-[40px] rounded-[2px] border border-[#cfd3ca]" />
            </div>
          </div>
        </div>
        <div className="ml-[13px] mt-[30px] h-[32px] w-[179px] rounded-[2px] bg-[#069b60]" />
      </div>
    </div>
  );
}

const btn = "flex h-[20px] items-center border border-b-[#55574f] border-l-[#f5f7f0] border-r-[#55574f] border-t-[#f5f7f0] bg-[#cdd0c7]";

function XpTaskbar() {
  return (
    <div className="flex h-[24px] items-center border-t-2 border-[#e8eae2] bg-[#cdd0c7] font-['DejaVu_Sans_Condensed','DejaVu_Sans',sans-serif] text-[10.5px] text-[#111]">
      <div className={btn + " ml-[1px] w-[52px] pl-[2px] font-bold"}>
        <I s={13}><path d="M1 3l6-1v6H1z" fill="#e5512a" stroke="none" /><path d="M8 1l7 1v6H8z" fill="#7bb542" stroke="none" /><path d="M1 9h6v6H1z" fill="#3d74cf" stroke="none" /><path d="M8 9h7v6H8z" fill="#f2bd2d" stroke="none" /></I>
        <T c="ml-[1px]" w={32}>Iniciar</T>
      </div>
      <div className="ml-[7px] h-4 w-[2px] border-l border-r border-l-[#8a8c84] border-r-white" />
      <div className="ml-[4px] flex h-[20px] w-[138px] items-center border border-b-white border-l-[#55574f] border-r-white border-t-[#55574f] bg-[#e4e6de] pl-[3px] font-bold">
        <Firefox s={13} />
        <T c="ml-[4px]" w={109}>Execução - Hilum - U...</T>
      </div>
      {[0, 1, 2, 3].map((i) => (
        <div key={i} className={btn + " ml-[2px] w-[140px] pl-[2px]"}>
          <AnyIcon s={15} />
          <T c="ml-[3px]" w={37}>AnyDesk</T>
        </div>
      ))}
      <div className="ml-[5px] flex h-[20px] w-[117px] items-center border border-b-white border-l-[#85877f] border-r-white border-t-[#85877f] pl-[2px]">
        <I s={14}><circle cx="8" cy="8" r="6" stroke="#f2a01f" strokeWidth="3" fill="#fff" /><circle cx="8" cy="8" r="2" fill="#f2a01f" stroke="none" /></I>
        <I c="ml-px" s={14}><path d="M6 1h9v7H6zM1 6h9v7H1z" fill="#4f90dc" stroke="#dcecff" /></I>
        <I c="ml-[2px] text-black" s={14} sw={3}><path d="M1 2l14 12M14 1L2 14M5 4l6 8" /></I>
        <AnyIcon c="ml-[2px]" s={14} />
        <I c="ml-[1px] text-[#555]" s={14} sw={1.5}><circle cx="6" cy="6" r="4.500" fill="#999" /><path d="M12 11c2-1 3-3 2-6" stroke="#99a" /></I>
        <T c="ml-[6px]" w={25}>10:44</T>
      </div>
    </div>
  );
}

function RightMonitor() {
  return (
    <div className="flex h-[1024px] w-[1366px] shrink-0 flex-col bg-black pt-[82px]">
      <AnyDeskChrome />
      <div className="flex h-[672px] bg-[#808080] bg-gradient-to-b from-[#808080] from-85% to-[#666]">
        <div className="ml-[234px] w-[898px] border-x border-[#333]">
          <FirefoxChrome />
          <RemotePage />
          <XpTaskbar />
        </div>
      </div>
      <div className="flex h-[30px] shrink-0 items-center bg-[#3a3c38] bg-gradient-to-r from-[#3a3c38] from-70% to-[#222] to-78% text-white">
        <div className="-ml-px h-full"><TaskIcons /></div>
        <AnyIcon c="ml-[546px]" />
        <I c="ml-[8px]"><path d="M7.500 0L15 2v6c0 4-4 7-7.500 8C4 15 0 12 0 8V2z" fill="#fff" stroke="none" /><path d="M7.500 0v16M0 7.500h15" stroke="#222" /><circle cx="11.500" cy="11.500" r="4.500" fill="#d8262c" stroke="none" /><path d="M9.500 9.500l4 4M13.500 9.500l-4 4" stroke="#fff" strokeWidth="1.300" /></I>
        <I c="ml-[8px]" sw={1.3}><rect x="1" y="2" width="14" height="12" rx="1" /><path d="M3 4l5 6 5-6" /></I>
        <I c="ml-[8px]"><circle cx="6" cy="6" r="6" fill="#0b91dc" stroke="none" /><circle cx="10" cy="10" r="6" fill="#0b91dc" stroke="none" /><text x="8" y="12.500" textAnchor="middle" fontSize="12" fontWeight="700" fill="#fff" stroke="none" fontFamily="Open Sans, sans-serif">S</text><circle cx="13.300" cy="2.500" r="2.500" fill="#ee4438" stroke="none" /></I>
        <I c="ml-[8px]"><path d="M5 5V.5h5V5M3.500 5h8v8c0 2-1 2.500-3 2.500s-5 0-5-2.500zM10 12.500l2 2 3.500-3.500" /></I>
        <I c="ml-[8px]"><circle cx="8" cy="8" r="8" fill="#0f96d6" stroke="none" /><text x="7.800" y="11.500" textAnchor="middle" fontSize="10.500" fontStyle="italic" fontWeight="600" fill="#fff" stroke="none" fontFamily="Open Sans, sans-serif">hp</text></I>
        <I c="ml-[8px]"><path d="M3 12c-4 0-3-5 0-5 1-5 8-5 9 0 4 0 4 5 1 5z" fill="#8a8a8a" stroke="none" /><path d="M1 2l14 12" stroke="#ddd" strokeWidth="1.300" /></I>
        <I c="ml-[8px]" sw={1.1}><path d="M5 3.500h10.500v8H3.500V7M9.500 11.500v3M6 14.500h7M.5 1.500h4V6h-4zM2.500 6v8.500" /></I>
        <I c="ml-[8px]" sw={1.1}><path d="M1 6h2.500L7 3v10L3.500 10H1zM9 6c1 1 1 3 0 4M11 4c2 2 2 6 0 8M13 2c3 3 3 9 0 12" /></I>
        <T c="ml-[10px] text-[12px]" w={24}>POR</T>
        <T c="ml-[13px] text-[12px]" w={27}>10:43</T>
        <I c="ml-[17px]" s={17}><path d="M0 0h16v12h-6l-2 3-2-3H0z" fill="#fff" stroke="none" /><path d="M3 3.500h10M3 6h10M3 8.500h6" stroke="#222" /></I>
        <div className="ml-[21px] h-full w-px bg-[#666]" />
      </div>
    </div>
  );
}

export default function App() {
  return (
    <div className="flex h-[1024px] w-[2646px] overflow-hidden bg-black font-['Open_Sans',sans-serif]">
      <LeftMonitor />
      <RightMonitor />
    </div>
  );
}
